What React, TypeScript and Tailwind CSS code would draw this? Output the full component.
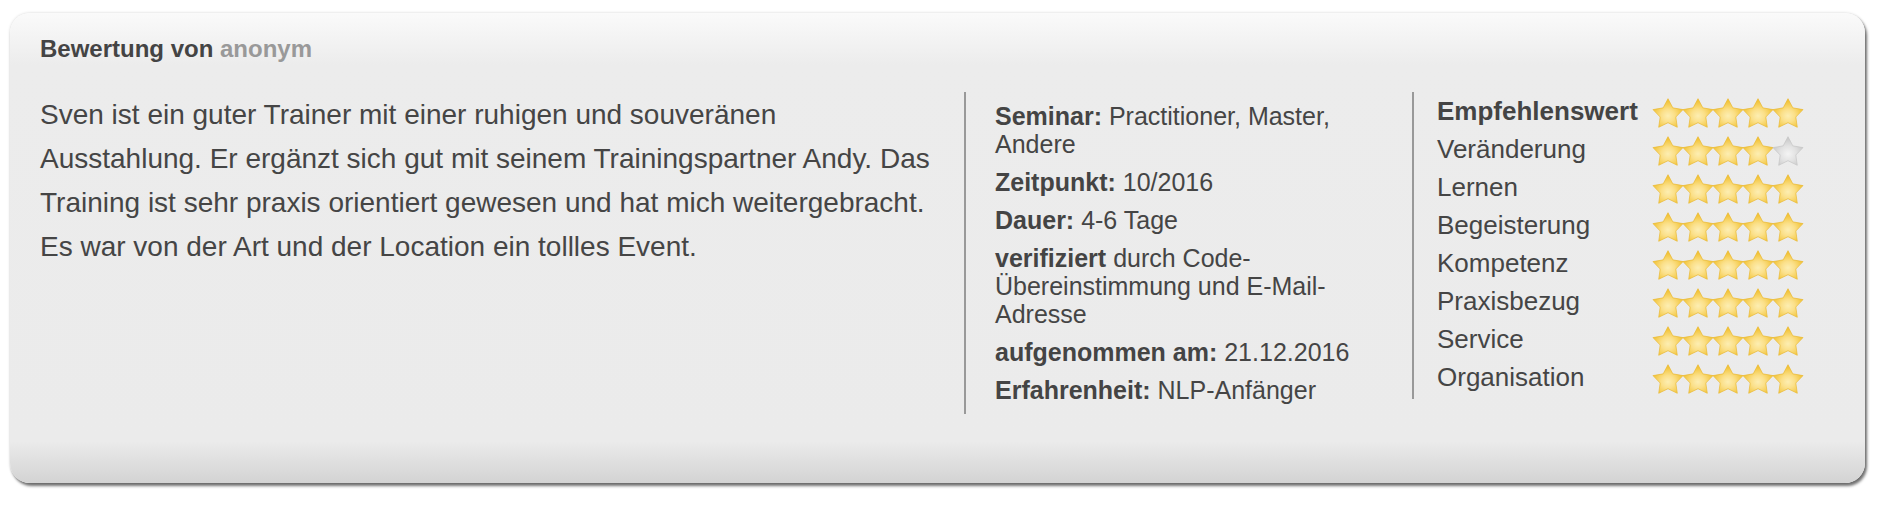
import React from 'react';

const ratings = [
    { label: 'Empfehlenswert', value: 5, bold: true },
    { label: 'Veränderung', value: 4 },
    { label: 'Lernen', value: 5 },
    { label: 'Begeisterung', value: 5 },
    { label: 'Kompetenz', value: 5 },
    { label: 'Praxisbezug', value: 5 },
    { label: 'Service', value: 5 },
    { label: 'Organisation', value: 5 },
];

const details = [
    { label: 'Seminar:', text: 'Practitioner, Master, Andere' },
    { label: 'Zeitpunkt:', text: '10/2016' },
    { label: 'Dauer:', text: '4-6 Tage' },
    { label: 'verifiziert', text: 'durch Code-Übereinstimmung und E-Mail-Adresse' },
    { label: 'aufgenommen am:', text: '21.12.2016' },
    { label: 'Erfahrenheit:', text: 'NLP-Anfänger' },
];

// 5-point star outline
const starPoints = (() => {
    const pts: string[] = [];
    const cx = 15, cy = 16.5, R = 15.8, r = 8.2;
    for (let i = 0; i < 10; i++) {
        const a = ((-90 + i * 36) * Math.PI) / 180;
        const rad = i % 2 === 0 ? R : r;
        pts.push(`${(cx + rad * Math.cos(a)).toFixed(2)},${(cy + rad * Math.sin(a)).toFixed(2)}`);
    }
    return pts.join(' ');
})();

const Star = ({ filled }: { filled: boolean }) => (
    <svg width="30" height="30" viewBox="0 0 30 30" className="shrink-0 overflow-visible">
        <defs>
            <radialGradient id="starGold" cx="50%" cy="60%" r="55%">
                <stop offset="0%" stopColor="#fdeeb2" />
                <stop offset="40%" stopColor="#fbe08a" />
                <stop offset="100%" stopColor="#f1c02c" />
            </radialGradient>
            <radialGradient id="starGray" cx="50%" cy="60%" r="55%">
                <stop offset="0%" stopColor="#f4f4f4" />
                <stop offset="50%" stopColor="#e2e2e2" />
                <stop offset="100%" stopColor="#c8c8c8" />
            </radialGradient>
        </defs>
        <polygon
            points={starPoints}
            fill={filled ? 'url(#starGold)' : 'url(#starGray)'}
            stroke={filled ? '#e9b934' : '#c6c6c6'}
            strokeWidth="0.7"
            strokeLinejoin="round"
        />
    </svg>
);

const App = () => {
    return (
        <div className="w-full h-[508px] bg-white pt-[13px] pl-[10px] font-['Liberation_Sans',Arial,sans-serif] text-[#454545]">
            <div className="w-[1855px] h-[470px] rounded-[20px] bg-[linear-gradient(to_bottom,#fafafa_0px,#ececec_52px,#ebebeb_calc(100%_-_42px),#d3d3d3_100%)] shadow-[2px_3px_3px_rgba(0,0,0,0.55),0_0_3px_rgba(0,0,0,0.18)] pl-[30px] pt-[22px]">
                <h2 className="text-[24px] leading-[28px] font-bold text-[#444]">
                    Bewertung von <span className="text-[#999]">anonym</span>
                </h2>

                <div className="flex items-start mt-[29px]">
                    {/* Review text */}
                    <p className="w-[900px] text-[28px] leading-[44px] pt-[1px]">
                        Sven ist ein guter Trainer mit einer ruhigen und souveränen Ausstahlung. Er ergänzt sich gut mit seinem Trainingspartner Andy. Das Training ist sehr praxis orientiert gewesen und hat mich weitergebracht. Es war von der Art und der Location ein tollles Event.
                    </p>

                    {/* Details */}
                    <div className="ml-[24px] w-[448px] border-l-2 border-[#999] pl-[29px] pr-[37px] py-[10px] flex flex-col gap-[10px]">
                        {details.map(d => (
                            <p key={d.label} className="text-[25px] leading-[28px]">
                                <span className="font-bold text-[#444]">{d.label}</span> {d.text}
                            </p>
                        ))}
                    </div>

                    {/* Ratings */}
                    <div className="border-l-2 border-[#999] pl-[23px] pb-[3px]">
                        {ratings.map(r => (
                            <div key={r.label} className="flex items-center h-[38px]">
                                <span className={`w-[216px] text-[26px] leading-[38px] ${r.bold ? 'font-bold text-[#444]' : ''}`}>
                                    {r.label}
                                </span>
                                <div className="flex mt-[4px]">
                                    {[0, 1, 2, 3, 4].map(i => (
                                        <Star key={i} filled={i < r.value} />
                                    ))}
                                </div>
                            </div>
                        ))}
                    </div>
                </div>
            </div>
        </div>
    );
};

export default App;
